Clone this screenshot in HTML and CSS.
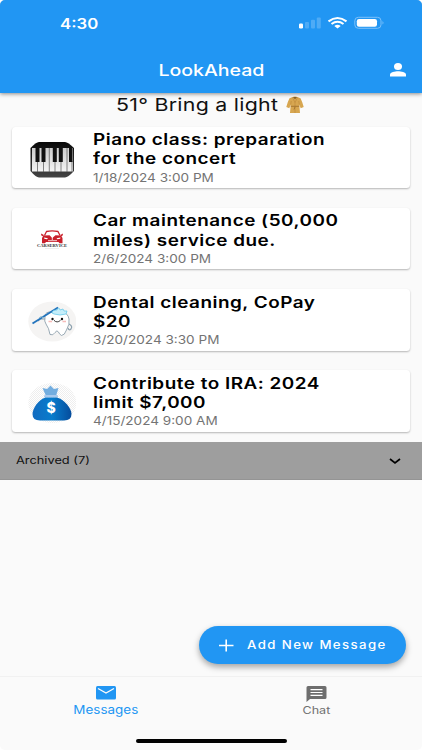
FILE: index.html
```html
<!DOCTYPE html>
<html lang="en">
<head>
<meta charset="utf-8">
<title>LookAhead</title>
<link rel="stylesheet" href="styles.css">
</head>
<body>
<div class="screen">
  <header class="appbar">
    <div class="status">
      <span class="wide clock">4:30</span>
      <svg class="status-icons" width="88" height="14" viewBox="0 0 88 14">
        <rect x="1" y="7.500" width="4" height="5" rx="1.200" fill="#fff"/>
        <g fill="#4eabf6"><rect x="7" y="6" width="4" height="6.500" rx="1"/><rect x="13" y="3.800" width="4" height="8.700" rx="1"/><rect x="18.800" y="1.500" width="4" height="11" rx="1"/></g>
        <g fill="none" stroke="#fff" stroke-width="2.100"><path d="M30.500 5.300Q39.500-1.300 48.500 5.300"/><path d="M33.500 8Q39.500 3.500 45.500 8"/></g>
        <path d="M36.300 10Q39.500 7.700 42.700 10L39.500 12.500Z" fill="#fff"/>
        <rect x="56.800" y="1.300" width="26.200" height="11" rx="3.500" fill="none" stroke="#7cc0f9"/>
        <rect x="58.800" y="3" width="20.200" height="7.700" rx="2.200" fill="#fff"/>
        <path d="M84.500 5Q86.500 6.800 84.500 8.600Z" fill="#7cc0f9"/>
      </svg>
    </div>
    <div class="toolbar">
      <h1 class="wide title">LookAhead</h1>
      <svg class="person" width="16" height="14" viewBox="0 0 16 14" fill="#fff"><ellipse cx="8" cy="3.500" rx="4" ry="3.500"/><path d="M0 13.500V11.500C0 9.300 5 8.200 8 8.200S16 9.300 16 11.500V13.500Z"/></svg>
    </div>
  </header>
  <main class="content">
    <div class="weather">
      <span class="wide forecast">51° Bring a light</span>
      <svg class="coat" width="18" height="18" viewBox="0 0 18 18">
        <path d="M6 1.200Q9 0 12 1.200L14.500 2.300Q16 5 17.700 11L14.700 12.200L13.300 8.500L14 17H4L4.700 8.500L3.300 12.200L.300 11Q2 5 3.500 2.300Z" fill="#d7a650"/>
        <path d="M6.500 1.500L9 6.500L11.500 1.500M9 6.500V17M4.700 8.500L5.300 5M13.300 8.500L12.700 5" fill="none" stroke="#b68336" stroke-width=".5"/>
        <path d="M4.800 10.300H13.200M9 11L8 13.500" fill="none" stroke="#9b6c29" stroke-width=".8"/>
        <path d="M7 1.100H11L9 3.300Z" fill="#85602b"/>
      </svg>
    </div>
    <ul class="cards">
      <li class="card">
        <div class="thumb"><svg width="48" height="42" viewBox="0 0 48 42">
          <defs><linearGradient id="case" x2="0" y2="1"><stop stop-color="#080808"/><stop offset="1" stop-color="#444"/></linearGradient><linearGradient id="keys" x2="0" y2="1"><stop stop-color="#ccc"/><stop offset="1" stop-color="#f5f5f5"/></linearGradient></defs>
          <path d="M11 3H37Q40 3 46 9V32Q40 38.500 37 38.500H11Q8 38.500 2.500 32V9Q8 3 11 3Z" fill="url(#case)"/>
          <path d="M4 9H45V32.500H4Z" fill="url(#keys)"/>
          <path d="M9.500 22V33M15.500 22V33M21.300 9V33M27 22V33M33 22V33M39 9V33M44 22V33" stroke="#555" stroke-width=".7"/>
          <path d="M7.500 9h4v14h-4zM13.500 9h4v14h-4zM24.800 9h4v14h-4zM30.800 9h4v14h-4zM41 9h3.500v14h-3.500z" fill="#111"/>
        </svg></div>
        <div class="body"><h2 class="wide heading"><span>Piano class: preparation</span><br><span>for the concert</span></h2><p class="wide date">1/18/2024 3:00 PM</p></div>
      </li>
      <li class="card">
        <div class="thumb"><svg width="48" height="42" viewBox="0 0 48 42">
          <g transform="translate(0 1)">
          <path d="M16.500 14.500L18.500 10.500Q24 9.300 30 10.500L32 14.500" fill="none" stroke="#c9202b" stroke-width="1.300"/>
          <path d="M13 12.500L16 14L15 15.300L13.300 14.500ZM35 12.500L32.300 14L33.300 15.300L34.700 14.500Z" fill="#c9202b"/>
          <path d="M15.500 14.500L21.500 14.200L24.300 17L27.500 14.200L33 14.500L34.500 17V22.300H31.500L30.500 21H18L17 22.300H14V17Z" fill="#c9202b"/>
          <path d="M16 16.500L20 17.300L19 18.300L16.300 17.800ZM32.500 16.500L28.500 17.300L29.500 18.300L32.200 17.800Z" fill="#fff"/>
          <path d="M24.300 15V19M20 19.700H29" stroke="#fff" stroke-width=".8"/>
          <text x="9" y="26" textLength="30" lengthAdjust="spacingAndGlyphs" font-family="Liberation Serif, serif" font-size="3" font-weight="700" fill="#333">CARSERVICE</text><path d="M17 27.500H31" stroke="#ddd" stroke-width=".5"/>
          </g>
        </svg></div>
        <div class="body"><h2 class="wide heading"><span>Car maintenance (50,000</span><br><span>miles) service due.</span></h2><p class="wide date">2/6/2024 3:00 PM</p></div>
      </li>
      <li class="card">
        <div class="thumb"><svg width="48" height="42" viewBox="0 0 48 42">
          <ellipse cx="24.300" cy="20.500" rx="24" ry="20" fill="#f5f4f3"/>
          <path d="M17 18L12 18L10 20M41 23Q45 25 43 28Q41 30 40 27" fill="none" stroke="#8ca1ae" stroke-width="1.200"/>
          <path d="M17 17Q16 12 21 11Q28 13 34 11Q40 12 41 18Q42 23 38.500 29Q36.500 34.500 33.500 34.500Q31 33 30.500 31Q29 28.500 27 31.500Q25 35 22 33.500Q21 27 18 23Q16 20 17 17Z" fill="#fff" stroke="#8296a3" stroke-width=".8"/>
          <path d="M4.500 22.500L30 6.500" stroke="#2374bd" stroke-width="1.900"/>
          <path d="M11 17L13 15.500L16 17" fill="none" stroke="#93bcd0"/>
          <path d="M24 12Q24 9 29 9Q31 5 32 9L35 8L36 10L39 10L38 13Q32 15 26 13Z" fill="#c5eefa" stroke="#5fc6e8" stroke-width=".7"/>
          <circle cx="24.500" cy="18" r="1.200" fill="#111"/><circle cx="34" cy="18" r="1.200" fill="#111"/>
          <path d="M26 19.300Q29 22.500 32.500 19.300" fill="none" stroke="#222" stroke-width=".9"/>
          <path d="M20.500 20.500H24M34.500 20.500H38" stroke="#f7bbb9" stroke-width="1.500"/>
        </svg></div>
        <div class="body"><h2 class="wide heading"><span>Dental cleaning, CoPay</span><br><span>$20</span></h2><p class="wide date">3/20/2024 3:30 PM</p></div>
      </li>
      <li class="card">
        <div class="thumb"><svg width="48" height="42" viewBox="0 0 48 42">
          <defs><pattern id="hatch" width="2" height="2" patternUnits="userSpaceOnUse"><path d="M0 0L2 2" stroke="#e2e2e2" stroke-width=".6"/></pattern><linearGradient id="bag"><stop stop-color="#116bc0"/><stop offset=".5" stop-color="#087ccc"/><stop offset="1" stop-color="#054c9c"/></linearGradient></defs>
          <ellipse cx="24.300" cy="21" rx="24" ry="20" fill="url(#hatch)"/>
          <path d="M14.500 6L19 7L22.500 3.500L26 7L30.500 6L28 14H18Z" fill="#73addf"/>
          <rect x="16" y="13" width="14" height="2.600" rx="1.300" fill="#a9c9ed"/>
          <path d="M17.500 15.500H29C36 17.500 43.500 26 43.500 32Q43.500 38.500 36 38.500H12Q4.500 38.500 4.500 32C4.500 26 11 17.500 17.500 15.500Z" fill="url(#bag)"/>
          <text x="23" y="31.200" text-anchor="middle" font-family="Inter, sans-serif" font-size="14" font-weight="800" fill="#fff">$</text>
        </svg></div>
        <div class="body"><h2 class="wide heading"><span>Contribute to IRA: 2024</span><br><span>limit $7,000</span></h2><p class="wide date">4/15/2024 9:00 AM</p></div>
      </li>
    </ul>
    <div class="archived">
      <span class="wide archived-label">Archived (7)</span>
      <svg width="12" height="8" viewBox="0 0 12 8"><path d="M1 2L6 6L11 2" fill="none" stroke="#000" stroke-width="1.700"/></svg>
    </div>
    <div class="actions">
      <button class="add">
        <svg width="15" height="13" viewBox="0 0 15 13"><path d="M0 6.500H14.500M7.200 .500V12.500" stroke="#fff" stroke-width="1.600"/></svg>
        <span class="wide add-label">Add New Message</span>
      </button>
    </div>
  </main>
  <nav class="tabs">
    <a class="tab active">
      <svg width="20" height="14" viewBox="0 0 20 14"><rect width="20" height="13.500" rx="1.500" fill="#2196f3"/><path d="M2 2.500L10 7L18 2.500" fill="none" stroke="#fafafa" stroke-width="1.400"/></svg>
      <span class="wide tab-messages">Messages</span>
    </a>
    <a class="tab">
      <svg width="21" height="16" viewBox="0 0 21 16"><path d="M2 0H19Q20.500 0 20.500 1.500V11.500Q20.500 13 19 13H4L.500 16V1.500Q.500 0 2 0Z" fill="#6e6e6e"/><path d="M4.500 3.700H16.500M4.500 6.500H16.500M4.500 9.300H16.500" stroke="#fff" stroke-width="1.200"/></svg>
      <span class="wide tab-chat">Chat</span>
    </a>
  </nav>
  <div class="home"></div>
</div>
</body>
</html>
```
FILE: styles.css
```css
* { box-sizing: border-box; margin: 0; padding: 0; }
body { width: 422px; height: 750px; background: #fff; font-family: Inter, sans-serif; overflow: hidden; }
svg { display: block; flex: none; }
.screen { width: 422px; height: 750px; display: flex; flex-direction: column; background: #fafafa; border-radius: 5px; overflow: hidden; }
.wide { display: inline-block; white-space: nowrap; transform: scaleX(1.22); transform-origin: left center; }

.appbar { height: 93px; background: #2196f3; color: #fff; box-shadow: 0 1px 4px rgba(0,0,0,.45); position: relative; flex: none; }
.status { height: 47px; padding: 14px 36px 0 60px; display: flex; justify-content: space-between; }
.clock { font-size: 14.700px; line-height: 20px; font-weight: 600; transform: scaleX(1.14); }
.status-icons { margin-top: 2px; }
.toolbar { height: 46px; display: grid; grid-template-columns: 1fr auto 1fr; align-items: center; padding: 0 16px; }
.title { grid-column: 2; font-size: 16px; line-height: 46px; font-weight: 500; transform-origin: center; }
.person { justify-self: end; }

.content { flex: 1; display: flex; flex-direction: column; }
.weather { height: 33.500px; padding: 2px 0 0 116px; display: flex; }
.forecast { width: 169.500px; font-size: 17.500px; line-height: 20px; letter-spacing: .220px; color: #111; }
.coat { margin-top: 1px; }
.cards { list-style: none; padding: 0 12px; display: flex; flex-direction: column; gap: 19.600px; }
.card { height: 61.700px; display: flex; background: #fff; border-radius: 3.500px; box-shadow: 0 1px 2px rgba(0,0,0,.28); }
.thumb { width: 80.500px; padding: 12px 0 0 16px; flex: none; }
.body { padding-top: 3.500px; display: flex; flex-direction: column; align-items: flex-start; }
.heading { font-size: 15.500px; line-height: 19.300px; font-weight: 600; letter-spacing: .410px; color: #000; }
.date { font-size: 11.600px; line-height: 18.600px; color: #747474; transform: scaleX(1.170); }

.archived { height: 38.500px; margin-top: 9.500px; padding: 1px 21px 0 16px; display: flex; align-items: center; justify-content: space-between; background: #9e9e9e; border-bottom: 1px solid #949494; }
.archived-label { font-size: 10.500px; line-height: 15px; color: #111; }
.actions { flex: 1; display: flex; justify-content: flex-end; align-items: flex-end; padding: 0 16px 12px; }
.add { width: 207px; height: 38px; border: 0; border-radius: 19px; padding: 0 20px; display: flex; align-items: center; gap: 13px; background: #2196f3; color: #fff; font-family: inherit; box-shadow: 0 3px 6px rgba(0,0,0,.35); }
.add-label { font-size: 11.300px; font-weight: 500; letter-spacing: 1.200px; transform: scaleX(1.170); }

.tabs { height: 60px; display: grid; grid-template-columns: 1fr 1fr; border-top: 1px solid #f1f1f1; flex: none; }
.tab { display: flex; flex-direction: column; align-items: center; padding-top: 9px; color: #707070; }
.tab .wide { transform-origin: center; }
.tab .tab-messages { margin-top: 3px; font-size: 11.500px; line-height: 15px; transform: scaleX(1.170); }
.tab-chat { font-size: 10.300px; line-height: 17px; }
.active { color: #2196f3; }
.home { width: 151px; height: 4px; margin: 3px auto 7px; border-radius: 2px; background: #000; flex: none; }
```
